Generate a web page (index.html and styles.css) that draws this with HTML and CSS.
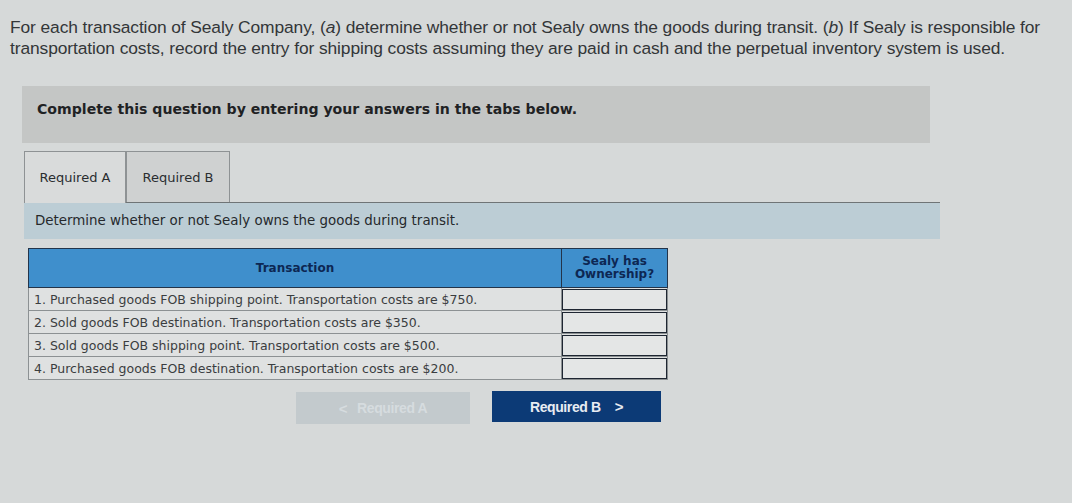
FILE: index.html
```html
<!DOCTYPE html>
<html>
<head>
<meta charset="utf-8">
<link rel="stylesheet" href="styles.css">
</head>
<body>
<div class="page">
  <p class="intro">For each transaction of Sealy Company, (<i>a</i>) determine whether or not Sealy owns the goods during transit. (<i>b</i>) If Sealy is responsible for transportation costs, record the entry for shipping costs assuming they are paid in cash and the perpetual inventory system is used.</p>

  <div class="notice">Complete this question by entering your answers in the tabs below.</div>

  <div class="tabs">
    <div class="tab active">Required A</div>
    <div class="tab">Required B</div>
  </div>
  <div class="panel-head">Determine whether or not Sealy owns the goods during transit.</div>

  <table class="grid">
    <thead>
      <tr>
        <th class="c1">Transaction</th>
        <th class="c2">Sealy has<br>Ownership?</th>
      </tr>
    </thead>
    <tbody>
      <tr><td class="c1">1. Purchased goods FOB shipping point. Transportation costs are $750.</td><td class="c2"><div class="inp"></div></td></tr>
      <tr><td class="c1">2. Sold goods FOB destination. Transportation costs are $350.</td><td class="c2"><div class="inp"></div></td></tr>
      <tr><td class="c1">3. Sold goods FOB shipping point. Transportation costs are $500.</td><td class="c2"><div class="inp"></div></td></tr>
      <tr><td class="c1">4. Purchased goods FOB destination. Transportation costs are $200.</td><td class="c2"><div class="inp"></div></td></tr>
    </tbody>
  </table>

  <div class="nav">
    <div class="btn prev"><span class="chev">&lt;</span> Required A</div>
    <div class="btn next">Required B <span class="chev">&gt;</span></div>
  </div>
</div>
</body>
</html>
```

FILE: styles.css
```css
html, body {
  margin: 0;
  padding: 0;
  background: #d6d9d9;
}
.page {
  width: 1072px;
  height: 503px;
  overflow: hidden;
  background: #d6d9d9;
}
.intro {
  margin: 17px 0 0 10px;
  width: 1055px;
  font-family: "Liberation Sans", Arial, sans-serif;
  font-size: 17.4px;
  line-height: 21px;
  letter-spacing: -0.1px;
  color: #333638;
}
.intro i { font-style: italic; }
.notice {
  margin: 27px 0 0 22px;
  width: 908px;
  height: 57px;
  box-sizing: border-box;
  padding: 15px 0 0 15px;
  background: #c4c6c5;
  font-family: "DejaVu Sans", Verdana, sans-serif;
  font-weight: bold;
  font-size: 14.1px;
  color: #1f2224;
}
.tabs {
  margin: 8px 0 0 24px;
  width: 916px;
  display: flex;
  border-bottom: 1px solid #6f7476;
}
.tab {
  width: 102px;
  height: 51px;
  box-sizing: border-box;
  border: 1px solid #8e9294;
  border-bottom: none;
  display: flex;
  align-items: center;
  justify-content: center;
  font-family: "DejaVu Sans", Verdana, sans-serif;
  font-size: 13px;
  color: #2a2d30;
  background: #cfd1d1;
  margin-bottom: -1px;
}
.tab.active {
  background: #d9dbdb;
  height: 52px;
}
.tab + .tab {
  width: 104px;
  margin-bottom: 0;
  height: 51px;
}
.panel-head {
  margin-left: 24px;
  width: 916px;
  height: 36px;
  box-sizing: border-box;
  padding: 10px 0 0 11px;
  background: #bccdd5;
  font-family: "DejaVu Sans", Verdana, sans-serif;
  font-size: 13.4px;
  color: #26292c;
}
.grid {
  margin: 9px 0 0 28px;
  width: 640px;
  border-collapse: collapse;
  font-family: "DejaVu Sans", Verdana, sans-serif;
}
.grid th {
  background: #3f8fcc;
  color: #0d2753;
  font-weight: bold;
  font-size: 12px;
  line-height: 13px;
  height: 38px;
  padding: 0;
  border: 1px solid #23344a;
  text-align: center;
}
.grid th.c1 { width: 533px; }
.grid th.c2 { width: 105px; }
.grid td {
  height: 22px;
  padding: 0;
  border: 1px solid #8c9193;
  font-size: 12.5px;
  color: #3a3d40;
  background: #dfe1e1;
}
.grid td.c1 { padding-left: 5px; }
.grid td.c2 {
  border: 1px solid #8c9193;
  padding: 0;
}
.inp {
  height: 21px;
  box-sizing: border-box;
  border: 1.5px solid #1e2632;
  background: #e4e6e6;
}
.nav {
  margin: 11px 0 0 296px;
  display: flex;
  gap: 22px;
  align-items: flex-start;
}
.btn {
  height: 32px;
  display: flex;
  align-items: center;
  justify-content: center;
  font-family: "Liberation Sans", Arial, sans-serif;
  font-weight: bold;
  font-size: 14px;
  letter-spacing: -0.4px;
}
.btn.prev {
  width: 174px;
  background: #c3cacd;
  color: #d6dcdf;
  margin-top: 1px;
}
.btn.next {
  width: 169px;
  height: 31px;
  background: #0c3a76;
  color: #e8ecf2;
}
.chev {
  display: inline-block;
  font-size: 15px;
}
.btn.next .chev { margin: 0 0 0 14px; }
.btn.prev .chev { margin: 0 10px 0 0; }
```
